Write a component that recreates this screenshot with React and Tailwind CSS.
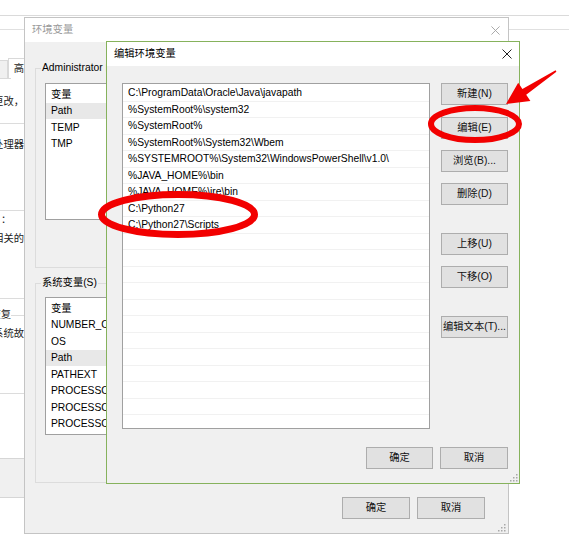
import React from "react";

const font = "font-['Liberation_Sans','Noto_Sans_CJK_SC',sans-serif]";

const pathRows = [
  "C:\\ProgramData\\Oracle\\Java\\javapath",
  "%SystemRoot%\\system32",
  "%SystemRoot%",
  "%SystemRoot%\\System32\\Wbem",
  "%SYSTEMROOT%\\System32\\WindowsPowerShell\\v1.0\\",
  "%JAVA_HOME%\\bin",
  "%JAVA_HOME%\\jre\\bin",
  "C:\\Python27",
  "C:\\Python27\\Scripts",
];

const userVars = ["Path", "TEMP", "TMP"];
const sysVars = ["NUMBER_OF_PROCESSORS", "OS", "Path", "PATHEXT", "PROCESSOR_ARCHITECTURE", "PROCESSOR_IDENTIFIER", "PROCESSOR_LEVEL"];

const WinButton = ({ children, className = "" }) => (
  <div
    className={`h-[22px] flex items-center justify-center bg-[#e1e1e1] border border-[#adadad] text-[#111] whitespace-nowrap ${className}`}
  >
    {children}
  </div>
);

const CloseIcon = ({ color, size }) => (
  <svg width={size} height={size} viewBox="0 0 10 10">
    <path d="M0.5 0.5 L9.5 9.5 M9.5 0.5 L0.5 9.5" stroke={color} strokeWidth="1" />
  </svg>
);

const Grip = () => (
  <svg width="10" height="10" viewBox="0 0 10 10">
    {[
      [8, 2],
      [8, 5],
      [5, 5],
      [8, 8],
      [5, 8],
      [2, 8],
    ].map(([x, y], i) => (
      <rect key={i} x={x} y={y} width="1.5" height="1.5" fill="#a8a8a8" />
    ))}
  </svg>
);

const VarList = ({ rows, selected, className = "" }) => (
  <div className={`bg-white border border-[#a0a0a0] overflow-hidden ${className}`}>
    <div className="h-[16.5px] flex items-center pl-[5px]">变量</div>
    {rows.map((r, i) => (
      <div
        key={i}
        className={`h-[16.5px] flex items-center pl-[5px] whitespace-nowrap ${
          r === selected ? "bg-[#e8e8e8]" : ""
        }`}
      >
        {r}
      </div>
    ))}
  </div>
);

// text of the window behind, cut off by the window in front
const Peek = ({ children }) => (
  <div className="h-[14px] flex items-center justify-end overflow-hidden whitespace-nowrap">{children}</div>
);

const App = () => {
  const emptyRows = Array.from({ length: 12 });

  return (
    <div className={`relative w-[569px] h-[549px] bg-white overflow-hidden text-[10.3px] text-black ${font}`}>
      {/* System properties window (behind) */}
      <div className="absolute top-[15px] left-0 right-0 h-[483px] border-t border-[#dadada] bg-white flex flex-col">
        <div className="h-[14px] border-b border-[#e0e0e0]" />
        <div className="flex-1 flex">
          <div className="w-[24px] flex flex-col text-[#222]">
            <div className="h-[28px]" />
            <div className="h-[20px] flex items-end">
              <div className="w-[11px] h-[18px] bg-[#f0f0f0] border-t border-r border-[#d9d9d9]" />
              <div className="flex-1 h-[20px] border-t border-l border-[#d9d9d9] bg-white pl-[5px] flex items-center">
                高
              </div>
            </div>
            <div className="h-[17px] border-t border-[#d9d9d9] w-[11px]" />
            <Peek>更改，</Peek>
            <div className="h-[14px]" />
            <div className="h-[15px] border-t border-[#dcdcdc]" />
            <Peek>处理器</Peek>
            <div className="h-[58px]" />
            <div className="h-[1px] bg-[#dcdcdc]" />
            <div className="h-[2px]" />
            <div className="h-[14px] flex items-center pl-[1px]">：</div>
            <div className="h-[5px]" />
            <Peek>相关的</Peek>
            <div className="h-[52px]" />
            <div className="h-[1px] bg-[#dcdcdc]" />
            <div className="h-[9px]" />
            <div className="h-[14px] flex items-center">
              <div className="w-[11px] overflow-hidden flex justify-end whitespace-nowrap">恢复</div>
              <div className="flex-1 h-px bg-[#dcdcdc]" />
            </div>
            <div className="h-[5px]" />
            <Peek>系统故</Peek>
            <div className="h-[52px]" />
            <div className="h-[1px] bg-[#dcdcdc]" />
            <div className="h-[64px]" />
            <div className="h-[40px] bg-[#f0f0f0] border-t border-b border-[#d6d6d6]" />
          </div>
          <div className="flex-1" />
        </div>
      </div>

      {/* 环境变量 window */}
      <div className="absolute left-[24px] top-[17px] w-[485px] h-[517px] border border-[#c4c4c4] bg-[#f0f0f0] flex flex-col">
        <div className="h-[24px] bg-white flex items-center justify-between pl-[7px] pr-[8px] text-[#9a9a9a]">
          <span>环境变量</span>
          <CloseIcon color="#a0a0a0" size={9} />
        </div>
        <div className="flex-1 flex flex-col px-[10px]">
          <fieldset className="mt-[19px] h-[207px] border border-[#dcdcdc] pl-[9px] pr-[9px]">
            <legend className="-ml-[4px] px-[1px] leading-[14px]">Administrator 的用户变量(U)</legend>
            <VarList rows={userVars} selected="Path" className="mt-[8px] h-[137px] w-[200px] pt-[2px]" />
          </fieldset>
          <fieldset className="mt-[8px] h-[207px] border border-[#dcdcdc] pl-[9px] pr-[9px]">
            <legend className="-ml-[4px] px-[1px] leading-[14px]">系统变量(S)</legend>
            <VarList rows={sysVars} selected="Path" className="mt-[7px] h-[138px] w-[200px] pt-[2px]" />
          </fieldset>
          <div className="mt-[14px] flex justify-end gap-[7px] pr-[13px]">
            <WinButton className="w-[68px]">确定</WinButton>
            <WinButton className="w-[68px]">取消</WinButton>
          </div>
          <div className="flex-1 flex items-end justify-end -mr-[8px] pb-[1px]">
            <Grip />
          </div>
        </div>
      </div>

      {/* 编辑环境变量 window */}
      <div className="absolute left-[106px] top-[41px] w-[414px] h-[443px] border border-[#86b25c] bg-[#f0f0f0] flex flex-col">
        <div className="h-[24px] bg-white flex items-center justify-between pl-[7px] pr-[7px]">
          <span>编辑环境变量</span>
          <CloseIcon color="#222" size={10} />
        </div>
        <div className="flex-1 flex flex-col pt-[17px] pl-[15px] pr-[11px]">
          <div className="flex gap-[11px]">
            <div className="w-[308px] h-[346px] bg-white border border-[#a0a0a0] overflow-hidden pt-[1px]">
              {pathRows.map((p, i) => (
                <div key={i} className="h-[16.5px] border-b border-[#f1f1f1] flex items-center pl-[5px] whitespace-nowrap">
                  {p}
                </div>
              ))}
              {emptyRows.map((_, i) => (
                <div key={"e" + i} className="h-[16.5px] border-b border-[#f1f1f1]" />
              ))}
            </div>
            <div className="w-[67px] flex flex-col">
              <WinButton>新建(N)</WinButton>
              <WinButton className="mt-[12px]">编辑(E)</WinButton>
              <WinButton className="mt-[11px]">浏览(B)...</WinButton>
              <WinButton className="mt-[11px]">删除(D)</WinButton>
              <WinButton className="mt-[28px]">上移(U)</WinButton>
              <WinButton className="mt-[11px]">下移(O)</WinButton>
              <WinButton className="mt-[28px]">编辑文本(T)...</WinButton>
            </div>
          </div>
          <div className="mt-[18px] flex justify-end gap-[7px]">
            <WinButton className="w-[67px] border-[#0078d7] border-[1.5px]">确定</WinButton>
            <WinButton className="w-[68px]">取消</WinButton>
          </div>
          <div className="flex-1 flex items-end justify-end -mr-[10px] pb-[1px]">
            <Grip />
          </div>
        </div>
      </div>

      {/* red annotations */}
      <svg className="absolute inset-0 pointer-events-none" width="569" height="549" viewBox="0 0 569 549">
        <ellipse cx="475" cy="124" rx="44" ry="16" fill="none" stroke="#f20000" strokeWidth="6" />
        <ellipse cx="178" cy="214.5" rx="76.5" ry="20" fill="none" stroke="#f20000" strokeWidth="7" />
        <polygon
          points="506,104 530.4,101 526.2,94.8 556.4,71.7 555.6,70.3 522.4,89 518.2,82.8"
          fill="#f20000"
        />
      </svg>
    </div>
  );
};

export default App;
